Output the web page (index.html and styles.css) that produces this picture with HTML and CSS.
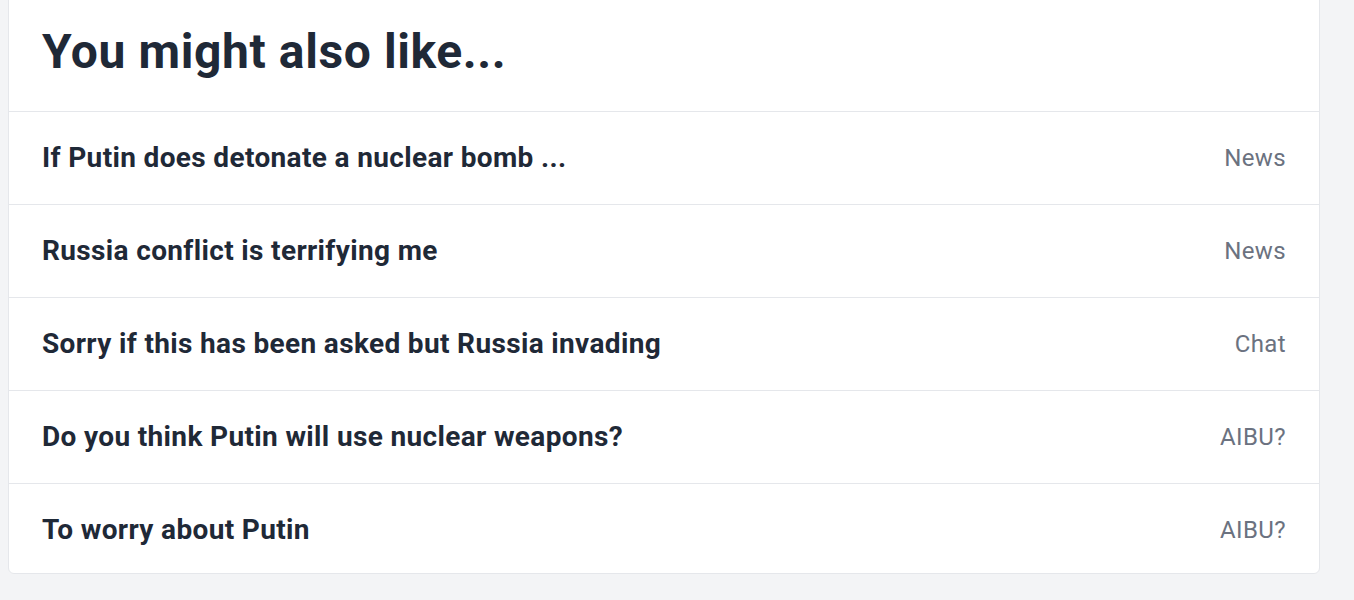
FILE: index.html
```html
<!DOCTYPE html>
<html lang="en">
<head>
<meta charset="utf-8">
<title>You might also like</title>
<link rel="stylesheet" href="styles.css">
</head>
<body>
<div class="page">
  <section class="card">
    <h2 class="card-title">You might also like...</h2>
    <ul class="list">
      <li class="row"><a class="row-title" href="#">If Putin does detonate a nuclear bomb ...</a><span class="row-topic">News</span></li>
      <li class="row"><a class="row-title" href="#">Russia conflict is terrifying me</a><span class="row-topic">News</span></li>
      <li class="row"><a class="row-title" href="#">Sorry if this has been asked but Russia invading</a><span class="row-topic">Chat</span></li>
      <li class="row"><a class="row-title" href="#">Do you think Putin will use nuclear weapons?</a><span class="row-topic">AIBU?</span></li>
      <li class="row"><a class="row-title" href="#">To worry about Putin</a><span class="row-topic">AIBU?</span></li>
    </ul>
  </section>
</div>
</body>
</html>
```

FILE: styles.css
```css
html, body {
  margin: 0;
  padding: 0;
  background: #f3f4f6;
  font-family: Roboto, "Liberation Sans", Arial, sans-serif;
  color: #1f2937;
}

.page {
  padding: 0 34px 0 8px;
}

.card {
  margin-top: -20px;
  background: #ffffff;
  border: 1px solid #e5e7eb;
  border-radius: 6px;
  overflow: hidden;
}

.card-title {
  margin: 0;
  padding: 45px 33px 33px;
  font-size: 48px;
  line-height: 52px;
  font-weight: 700;
  letter-spacing: 0.6px;
  color: #1f2937;
  border-bottom: 1px solid #e5e7eb;
}

.list {
  list-style: none;
  margin: 0;
  padding: 0;
}

.row {
  display: flex;
  justify-content: space-between;
  align-items: center;
  padding: 30px 33px 30px 33px;
  border-bottom: 1px solid #e5e7eb;
}

.row:last-child {
  border-bottom: none;
  padding-bottom: 27px;
}

.row-title {
  font-size: 28px;
  line-height: 32px;
  font-weight: 700;
  letter-spacing: 0.35px;
  color: #1f2937;
  text-decoration: none;
}

.row-topic {
  font-size: 24px;
  line-height: 32px;
  letter-spacing: 0.4px;
  color: #6b7280;
}
```
